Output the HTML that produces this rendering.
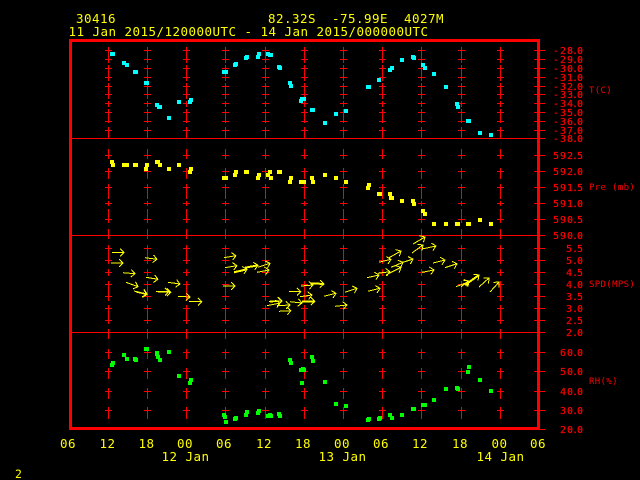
<!DOCTYPE html>
<html><head><meta charset="utf-8"><style>
html,body{margin:0;padding:0;background:#000;width:640px;height:480px;overflow:hidden}
svg{display:block}
text{font-family:"DejaVu Sans Mono","Liberation Mono",monospace;white-space:pre}
.y{fill:#ff0;font-size:12.5px;letter-spacing:.475px}
.r{fill:#f00;font-size:10px;stroke:#f00;stroke-width:.2px}
.l{fill:#f00;font-size:9px;letter-spacing:.35px}
.c{text-anchor:middle}
</style></head><body>
<svg width="640" height="480" viewBox="0 0 640 480" xmlns="http://www.w3.org/2000/svg">
<defs>
<marker id="a" markerWidth="12" markerHeight="12" refX="9" refY="6" orient="auto" markerUnits="userSpaceOnUse"><path d="M5 2.2L9 6L5 9.8" fill="none" stroke="#ff0" stroke-width="1" shape-rendering="crispEdges"/></marker>
<g id="col" shape-rendering="crispEdges" stroke="#f00" fill="none" stroke-width="1">
<path d="M.5 47V63M.5 65V81M.5 83V99M.5 101V107M.5 109V123M.5 127V139M.5 149V159M.5 168V179M.5 184V199M.5 201V206M.5 209V223M.5 229V239M.5 245V264M.5 269V276M.5 281V301M.5 305V324M.5 329V339M.5 349V359M.5 368V379M.5 388V399M.5 407V419"/>
<path d="M-3 50.5h7M-3 59.5h7M-3 68.5h7M-3 77.5h7M-3 86.5h7M-3 94.5h7M-3 103.5h7M-3 112.5h7M-3 121.5h7M-3 130.5h7M-3 155.5h7M-3 171.5h7M-3 187.5h7M-3 203.5h7M-3 219.5h7M-3 248.5h7M-3 260.5h7M-3 272.5h7M-3 284.5h7M-3 296.5h7M-3 308.5h7M-3 320.5h7M-3 352.5h7M-3 371.5h7M-3 391.5h7M-3 410.5h7"/>
</g>
</defs>
<rect width="640" height="480" fill="#000"/>
<use href="#col" x="108"/><use href="#col" x="147"/><use href="#col" x="186"/><use href="#col" x="225"/><use href="#col" x="265"/><use href="#col" x="304"/><use href="#col" x="343"/><use href="#col" x="382"/><use href="#col" x="421"/><use href="#col" x="461"/><use href="#col" x="500"/>
<g shape-rendering="crispEdges" fill="none" stroke="#f00">
<path d="M71 138.500H538M71 235.500H538M71 332.500H538" stroke-width="1"/>
<rect x="70.500" y="40.500" width="468" height="388" stroke-width="3"/>
<path d="M534 50.500h11M534 59.500h11M534 68.500h11M534 77.500h11M534 86.500h11M534 94.500h11M534 103.500h11M534 112.500h11M534 121.500h11M534 130.500h11M534 138.500h11M534 155.500h11M534 171.500h11M534 187.500h11M534 203.500h11M534 219.500h11M534 235.500h11M534 248.500h11M534 260.500h11M534 272.500h11M534 284.500h11M534 296.500h11M534 308.500h11M534 320.500h11M534 332.500h11M534 352.500h11M534 371.500h11M534 391.500h11M534 410.500h11M534 429.500h11" stroke-width="1"/>
</g>
<!-- cyan -->
<path shape-rendering="crispEdges" fill="#0ff" d="M110 52h5v4h-5zM122 61h4v4h-4zM125 63h4v4h-4zM133 70h5v4h-5zM144 81h5v4h-5zM155 103h4v4h-4zM157 105h5v4h-5zM167 116h4v4h-4zM177 100h4v4h-4zM188 100h4v4h-4zM189 98h4v4h-4zM222 70h6v4h-6zM233 63h4v4h-4zM234 62h4v4h-4zM244 56h4v4h-4zM245 55h4v4h-4zM256 55h4v4h-4zM257 52h4v4h-4zM266 52h4v4h-4zM268 53h5v4h-5zM277 65h4v4h-4zM278 66h4v4h-4zM288 81h4v4h-4zM289 84h4v4h-4zM299 99h4v4h-4zM300 97h4v4h-4zM302 97h4v4h-4zM310 108h5v4h-5zM323 121h4v4h-4zM334 112h4v4h-4zM344 109h4v4h-4zM366 85h5v4h-5zM377 78h4v4h-4zM388 68h4v4h-4zM390 66h4v4h-4zM400 58h4v4h-4zM411 55h4v4h-4zM412 56h4v4h-4zM421 63h4v4h-4zM423 66h4v4h-4zM432 72h4v4h-4zM444 85h4v4h-4zM455 102h4v4h-4zM456 105h4v4h-4zM466 119h5v4h-5zM478 131h4v4h-4zM489 133h4v4h-4z"/>
<!-- yellow -->
<path shape-rendering="crispEdges" fill="#ff0" d="M110 160h4v4h-4zM111 163h4v4h-4zM122 163h4v4h-4zM125 163h4v4h-4zM133 163h5v4h-5zM145 163h4v4h-4zM144 167h4v4h-4zM155 160h5v4h-5zM158 163h4v4h-4zM167 167h4v4h-4zM177 163h4v4h-4zM189 167h4v4h-4zM188 170h4v4h-4zM222 176h6v4h-6zM233 173h4v4h-4zM234 170h4v4h-4zM244 170h5v4h-5zM256 176h4v4h-4zM257 173h4v4h-4zM266 173h4v4h-4zM268 170h4v4h-4zM269 176h4v4h-4zM277 170h5v4h-5zM288 180h4v4h-4zM289 176h4v4h-4zM299 180h7v4h-7zM310 176h4v4h-4zM311 180h4v4h-4zM323 173h4v4h-4zM334 176h4v4h-4zM344 180h4v4h-4zM366 186h4v4h-4zM367 183h4v4h-4zM377 192h5v4h-5zM388 192h4v4h-4zM389 196h5v4h-5zM400 199h4v4h-4zM411 199h4v4h-4zM412 202h4v4h-4zM421 209h4v4h-4zM423 212h4v4h-4zM432 222h4v4h-4zM444 222h4v4h-4zM455 222h5v4h-5zM466 222h5v4h-5zM478 218h4v4h-4zM489 222h4v4h-4z"/>
<!-- green -->
<path shape-rendering="crispEdges" fill="#0f0" d="M110 363h4v4h-4zM111 361h4v4h-4zM122 353h4v4h-4zM125 357h4v4h-4zM133 357h4v4h-4zM134 358h4v4h-4zM144 347h5v4h-5zM155 351h4v5h-4zM156 355h4v4h-4zM158 358h4v4h-4zM167 350h4v4h-4zM177 374h4v4h-4zM189 378h4v4h-4zM188 381h4v4h-4zM222 413h4v4h-4zM223 415h4v4h-4zM224 420h4v4h-4zM233 417h4v4h-4zM234 416h4v4h-4zM244 413h4v4h-4zM245 410h4v4h-4zM256 411h4v4h-4zM257 409h4v4h-4zM266 414h4v4h-4zM268 413h4v4h-4zM269 414h4v4h-4zM277 412h4v4h-4zM278 414h4v4h-4zM288 358h4v4h-4zM289 361h4v4h-4zM299 368h4v4h-4zM301 367h4v4h-4zM302 368h4v4h-4zM300 381h4v4h-4zM310 355h4v4h-4zM311 359h4v4h-4zM323 380h4v4h-4zM334 402h4v4h-4zM344 404h4v4h-4zM366 418h4v4h-4zM367 417h4v4h-4zM377 417h4v4h-4zM378 416h4v4h-4zM388 413h4v4h-4zM390 416h4v4h-4zM400 413h4v4h-4zM411 407h5v4h-5zM421 403h4v4h-4zM423 403h4v4h-4zM432 398h4v4h-4zM444 387h4v4h-4zM455 386h4v4h-4zM456 387h4v4h-4zM466 370h4v4h-4zM467 365h4v4h-4zM478 378h4v4h-4zM489 389h4v4h-4z"/>
<!-- arrows -->
<g fill="none" stroke="#ff0" stroke-width="1" shape-rendering="crispEdges">
<path d="M112 252.500L124 252.500" marker-end="url(#a)"/>
<path d="M111 263L123 263" marker-end="url(#a)"/>
<path d="M123 272.700L135 273.700" marker-end="url(#a)"/>
<path d="M126 282.300L138 286.700" marker-end="url(#a)"/>
<path d="M134 291L147 294" marker-end="url(#a)"/>
<path d="M136 292L147 294.500" marker-end="url(#a)"/>
<path d="M145 257.700L157 259.300" marker-end="url(#a)"/>
<path d="M146 277.300L158 279.300" marker-end="url(#a)"/>
<path d="M156 291.700L169 291.700" marker-end="url(#a)"/>
<path d="M158 292L171 292.300" marker-end="url(#a)"/>
<path d="M168 282.300L180 284" marker-end="url(#a)"/>
<path d="M178 296.300L190 297" marker-end="url(#a)"/>
<path d="M189 301.700L202 301.700" marker-end="url(#a)"/>
<path d="M224 257.700L236 255.700" marker-end="url(#a)"/>
<path d="M225 267.700L237 265.700" marker-end="url(#a)"/>
<path d="M223 286L235 286" marker-end="url(#a)"/>
<path d="M234 272.300L247 269.300" stroke-width="2" marker-end="url(#a)"/>
<path d="M245 267.700L258 265.300" stroke-width="2" marker-end="url(#a)"/>
<path d="M258 267.300L270 263.300" marker-end="url(#a)"/>
<path d="M257 272.300L269 270" marker-end="url(#a)"/>
<path d="M269 301.300L282 300.700" marker-end="url(#a)"/>
<path d="M270 302L282 301" marker-end="url(#a)"/>
<path d="M267 305.700L280 303" marker-end="url(#a)"/>
<path d="M277 305.700L290 305" marker-end="url(#a)"/>
<path d="M279 311.300L291 310.700" marker-end="url(#a)"/>
<path d="M289 291.700L301 291.700" marker-end="url(#a)"/>
<path d="M290 301.700L302 303" marker-end="url(#a)"/>
<path d="M300 296.700L312 295" marker-end="url(#a)"/>
<path d="M301 286L313 285" marker-end="url(#a)"/>
<path d="M302 301.300L315 301.300" stroke-width="2" marker-end="url(#a)"/>
<path d="M311 283.300L324 284" stroke-width="2" marker-end="url(#a)"/>
<path d="M324 296.300L336 293.300" marker-end="url(#a)"/>
<path d="M335 306.300L347 305" marker-end="url(#a)"/>
<path d="M345 292.300L357 288.300" marker-end="url(#a)"/>
<path d="M368 291.300L380 288.300" marker-end="url(#a)"/>
<path d="M367 277.700L379 275" marker-end="url(#a)"/>
<path d="M379 262.300L391 259.300" marker-end="url(#a)"/>
<path d="M378 273.300L390 271.700" marker-end="url(#a)"/>
<path d="M386 275L401 267.300" marker-end="url(#a)"/>
<path d="M388 258.300L401 251" marker-end="url(#a)"/>
<path d="M391 267.300L403 262.300" marker-end="url(#a)"/>
<path d="M403 262.300L413 259" marker-end="url(#a)"/>
<path d="M412 253L423 245" marker-end="url(#a)"/>
<path d="M413 244L425 237" marker-end="url(#a)"/>
<path d="M422 249L436 246" marker-end="url(#a)"/>
<path d="M422 272.300L434 270" marker-end="url(#a)"/>
<path d="M433 263L445 260" marker-end="url(#a)"/>
<path d="M445 267.700L457 263.700" marker-end="url(#a)"/>
<path d="M456 286.700L469 281.700" marker-end="url(#a)"/>
<path d="M461 286.700L469 281" marker-end="url(#a)"/>
<path d="M465 285L479 275" stroke-width="2" marker-end="url(#a)"/>
<path d="M479 287L489 278" marker-end="url(#a)"/>
<path d="M490 292L499 282" marker-end="url(#a)"/>
</g>
<!-- header -->
<text class="y" x="76" y="23">30416</text>
<text class="y" x="268" y="23">82.32S  -75.99E  4027M</text>
<text class="y" x="68.500" y="36">11 Jan 2015/120000UTC - 14 Jan 2015/000000UTC</text>
<!-- right labels -->
<text class="r" x="553 560 567 572 577" y="54">-28.0</text>
<text class="r" x="553 560 567 572 577" y="63">-29.0</text>
<text class="r" x="553 560 567 572 577" y="72">-30.0</text>
<text class="r" x="553 560 567 572 577" y="81">-31.0</text>
<text class="r" x="553 560 567 572 577" y="90">-32.0</text>
<text class="r" x="553 560 567 572 577" y="98">-33.0</text>
<text class="r" x="553 560 567 572 577" y="107">-34.0</text>
<text class="r" x="553 560 567 572 577" y="116">-35.0</text>
<text class="r" x="553 560 567 572 577" y="125">-36.0</text>
<text class="r" x="553 560 567 572 577" y="134">-37.0</text>
<text class="r" x="553 560 567 572 577" y="142">-38.0</text>
<text class="r" x="553 560 567 572 577" y="159">592.5</text>
<text class="r" x="553 560 567 572 577" y="175">592.0</text>
<text class="r" x="553 560 567 572 577" y="191">591.5</text>
<text class="r" x="553 560 567 572 577" y="207">591.0</text>
<text class="r" x="553 560 567 572 577" y="223">590.5</text>
<text class="r" x="553 560 567 572 577" y="239">590.0</text>
<text class="r" x="566 572 577" y="252">5.5</text>
<text class="r" x="566 572 577" y="264">5.0</text>
<text class="r" x="566 572 577" y="276">4.5</text>
<text class="r" x="566 572 577" y="288">4.0</text>
<text class="r" x="566 572 577" y="300">3.5</text>
<text class="r" x="566 572 577" y="312">3.0</text>
<text class="r" x="566 572 577" y="324">2.5</text>
<text class="r" x="566 572 577" y="336">2.0</text>
<text class="r" x="560 567 572 577" y="356">60.0</text>
<text class="r" x="560 567 572 577" y="375">50.0</text>
<text class="r" x="560 567 572 577" y="395">40.0</text>
<text class="r" x="560 567 572 577" y="414">30.0</text>
<text class="r" x="560 567 572 577" y="433">20.0</text>
<text class="l" x="589" y="93">T(C)</text>
<text class="l" x="589" y="190">Pre (mb)</text>
<text class="l" x="589" y="287">SPD(MPS)</text>
<text class="l" x="589" y="384">RH(%)</text>
<!-- bottom axis -->
<text class="y c" x="68" y="448">06</text>
<text class="y c" x="107.500" y="448">12</text>
<text class="y c" x="146.500" y="448">18</text>
<text class="y c" x="185" y="448">00</text>
<text class="y c" x="224" y="448">06</text>
<text class="y c" x="264" y="448">12</text>
<text class="y c" x="303" y="448">18</text>
<text class="y c" x="342" y="448">00</text>
<text class="y c" x="381" y="448">06</text>
<text class="y c" x="420" y="448">12</text>
<text class="y c" x="460" y="448">18</text>
<text class="y c" x="499.500" y="448">00</text>
<text class="y c" x="538" y="448">06</text>
<text class="y" x="161.500" y="461">12 Jan</text>
<text class="y" x="318.500" y="461">13 Jan</text>
<text class="y" x="476.500" y="461">14 Jan</text>
<text class="y" x="15" y="478" style="font-size:11.500px">2</text>
</svg>
</body></html>
